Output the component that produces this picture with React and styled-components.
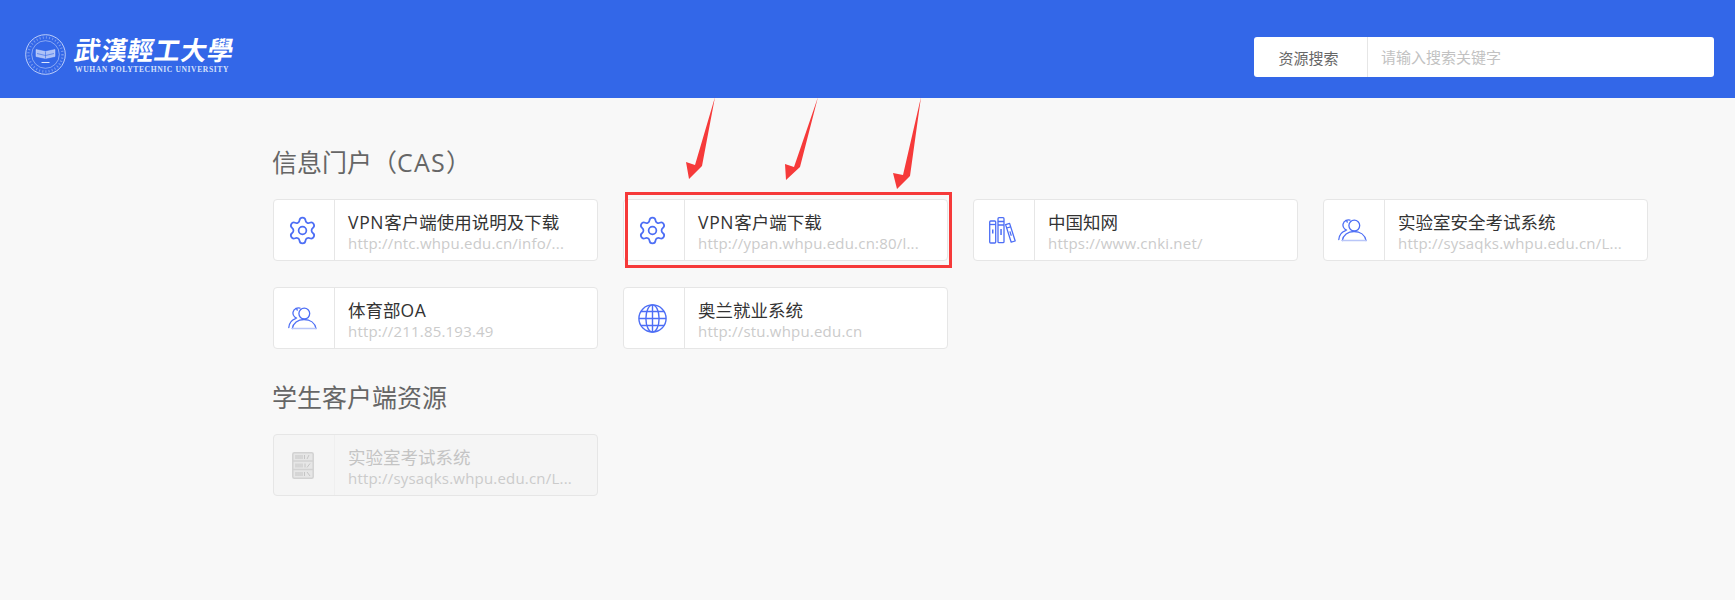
import React from 'react';
import styled, { createGlobalStyle } from 'styled-components';
import { Settings } from 'lucide-react';

const GlobalStyle = createGlobalStyle`
  html, body { margin: 0; padding: 0; background: #f8f8f8; }
  body { font-family: "Open Sans", "Noto Sans CJK SC", sans-serif; }
`;

const Page = styled.div`
  position: relative;
  width: 1735px;
  height: 600px;
  overflow: hidden;
  background: #f8f8f8;
`;

const Header = styled.header`
  height: 98px;
  background: #3367e8;
  display: flex;
  align-items: center;
  justify-content: space-between;
  padding: 0 21px 0 25px;
  box-sizing: border-box;
`;

const Logo = styled.div`
  display: flex;
  align-items: center;
  gap: 9px;
  margin-top: 10px;
`;

const LogoText = styled.div`
  display: flex;
  flex-direction: column;
  color: #fff;
`;

const LogoCn = styled.div`
  font-family: "Noto Sans CJK TC", sans-serif;
  font-weight: 700;
  font-size: 26px;
  line-height: 32px;
  letter-spacing: 0.6px;
  white-space: nowrap;
  transform: skewX(-10deg);
`;

const LogoEn = styled.div`
  font-family: "Liberation Serif", serif;
  font-weight: 700;
  font-size: 7.6px;
  line-height: 10px;
  letter-spacing: 0.6px;
  white-space: nowrap;
  color: #d5e0fb;
`;

const Search = styled.div`
  width: 460px;
  height: 40px;
  margin-top: 16px;
  background: #fff;
  border-radius: 3px;
  display: flex;
  align-items: center;
  font-size: 15px;
`;

const SearchLabel = styled.div`
  width: 109px;
  height: 100%;
  flex: none;
  padding-right: 4px;
  display: flex;
  align-items: center;
  justify-content: center;
  color: #666;
  border-right: 1px solid #e6e6e6;
`;

const SearchInput = styled.input`
  flex: 1;
  border: 0;
  outline: 0;
  padding: 0 13px;
  background: transparent;
  font: inherit;
  &::placeholder { color: #c2c2c2; opacity: 1; }
`;

const Main = styled.main`
  padding: 48px 0 0 273px;
`;

const SectionTitle = styled.h2`
  margin: 0 0 0 -1px;
  font-size: 25px;
  font-weight: 400;
  line-height: 32px;
  color: #666;
`;

const Grid = styled.div`
  display: grid;
  grid-template-columns: repeat(4, 325px);
  column-gap: 25px;
  row-gap: 26px;
  margin: 21px 0 32px;
`;

const Card = styled.div`
  height: 62px;
  box-sizing: border-box;
  display: flex;
  border: 1px solid #e6e6e6;
  border-radius: 4px;
  background: ${p => (p.$disabled ? '#f5f5f5' : '#fff')};
`;

const IconCell = styled.div`
  width: 57px;
  flex: none;
  padding-right: 3px;
  display: flex;
  align-items: center;
  justify-content: center;
  border-right: 1px solid ${p => (p.$disabled ? '#efefef' : '#e6e6e6')};
`;

const CardBody = styled.div`
  flex: 1;
  min-width: 0;
  padding: 10px 0 0 13px;
`;

const CardTitle = styled.div`
  font-size: 17.5px;
  line-height: 24px;
  color: ${p => (p.$disabled ? '#c4c4c4' : '#333')};
  white-space: nowrap;
`;

const CardUrl = styled.div`
  font-size: 15px;
  line-height: 19px;
  letter-spacing: 0.2px;
  color: #cbcbcb;
  white-space: nowrap;
`;

const Latin = styled.span`
  letter-spacing: ${p => p.$spacing}px;
`;

const Annotations = styled.div`
  position: absolute;
  inset: 0;
  pointer-events: none;
`;

const RedBox = styled.div`
  position: absolute;
  left: 625px;
  top: 192px;
  width: 327px;
  height: 76px;
  box-sizing: border-box;
  border: 3px solid #f63a3a;
`;

const ArrowLayer = styled.svg`
  position: absolute;
  left: 0;
  top: 0;
`;

const BLUE = '#4d6ef5';

const Seal = () => (
  <svg width="41" height="41" viewBox="0 0 41 41" fill="none" stroke="#dfe7fc">
    <circle cx="20.5" cy="20.5" r="19.8" strokeWidth="0.8" />
    <circle cx="20.5" cy="20.5" r="13.8" strokeWidth="0.5" />
    <circle cx="20.5" cy="20.5" r="17" strokeWidth="2.4" strokeDasharray="1 2.2" opacity="0.4" />
    <path d="M11 15.500l9.500 2 9.500-2v7l-9.500 2-9.500-2z" fill="#dfe7fc" fillOpacity="0.7" strokeWidth="0.4" />
    <path d="M12 19.500l8.500 2 8.500-2M20.500 17.500v7" stroke="#3367e8" strokeWidth="0.6" />
    <path d="M16.500 28.500h8" strokeWidth="1" />
  </svg>
);

const GearIcon = () => <Settings size={31} strokeWidth={1.35} color={BLUE} />;

const UsersIcon = () => (
  <svg width="29" height="23" viewBox="0 0 29 23" fill="none" stroke={BLUE} strokeWidth="1.3" strokeLinecap="round">
    <circle cx="16.3" cy="6.6" r="5.4" />
    <path d="M9.3 3.2A5.2 5.2 0 0 0 8.2 1.3 5.2 5.2 0 0 1 12 1.2M8.2 1.3a5.2 5.2 0 0 0-1.6 8.6c.5.5 1.2.9 2 1.2" />
    <path d="M4.3 21.500c.8-5.600 5.500-9 11.700-9s11 3.400 12 9" />
    <path d="M4.3 21.500H28" stroke="#b9c6f8" />
    <path d="M.8 20.500c.4-4.300 3-7.600 6.700-8.900" />
  </svg>
);

const BooksIcon = () => (
  <svg width="27" height="27" viewBox="0 0 27 27" fill="none" stroke={BLUE} strokeWidth="1.3" strokeLinejoin="round">
    <rect x="0.7" y="4" width="6" height="22" rx="1" />
    <path d="M.7 7.500h6" />
    <rect x="3" y="12.500" width="1.500" height="4" fill={BLUE} stroke="none" />
    <rect x="9" y="0.7" width="6" height="25" rx="1" />
    <path d="M9 4.500h6M9 8h6" />
    <rect x="11.3" y="12" width="1.500" height="6" fill={BLUE} stroke="none" />
    <path d="M16.600 7.600l4-1.200 5.600 17.600-4 1.200z" />
    <path d="M17.600 11l4-1.200" />
    <path d="M20.300 14.600l1.200-.4 1.400 4.400-1.200.4z" fill={BLUE} stroke="none" />
  </svg>
);

const GlobeIcon = () => (
  <svg width="29" height="29" viewBox="0 0 29 29" fill="none" stroke={BLUE} strokeWidth="1.4">
    <circle cx="14.500" cy="14.500" r="13.600" />
    <ellipse cx="14.500" cy="14.500" rx="6.600" ry="13.600" />
    <path d="M14.500 1v27M1 14.500h27M3 7.500h23M3 21.500h23" />
  </svg>
);

const ShelfIcon = () => (
  <svg width="22" height="27" viewBox="0 0 22 27" fill="none" stroke="#d2d2d2">
    <rect x="0.8" y="0.8" width="20.400" height="25.400" rx="1.500" strokeWidth="1.500" fill="#e6e6e6" />
    <path d="M1 9h20M1 17.500h20" strokeWidth="1.500" />
    <path d="M4 7V3M6 7V3M8 7V3M10 7V3M12.500 7V3M15 7l2-4M4 15.500v-4M6 15.500v-4M8 15.500v-4M10 15.500v-4M13 15.500v-4M15 15.500l3-4M4 24v-4M6 24v-4M8 24v-4M10 24v-4M12.500 24v-4M15 20l3 4" stroke="#bdbdbd" strokeWidth="0.8" />
  </svg>
);

const sections = [
  {
    title: '信息门户（CAS）',
    items: [
      { icon: <GearIcon />, title: 'VPN客户端使用说明及下载', url: 'http://ntc.whpu.edu.cn/info/...' },
      { icon: <GearIcon />, title: 'VPN客户端下载', url: 'http://ypan.whpu.edu.cn:80/l...' },
      { icon: <BooksIcon />, title: '中国知网', url: 'https://www.cnki.net/' },
      { icon: <UsersIcon />, title: '实验室安全考试系统', url: 'http://sysaqks.whpu.edu.cn/L...' },
      { icon: <UsersIcon />, title: '体育部OA', url: 'http://211.85.193.49' },
      { icon: <GlobeIcon />, title: '奥兰就业系统', url: 'http://stu.whpu.edu.cn' },
    ],
  },
  {
    title: '学生客户端资源',
    items: [
      { icon: <ShelfIcon />, title: '实验室考试系统', url: 'http://sysaqks.whpu.edu.cn/L...', disabled: true },
    ],
  },
];

const arrows = [
  '715,97 702,166 689,179 686,162 695,165',
  '818,97 800,167 786,180 785,164 794,167',
  '921,97 910,176 897,189 893,173 903,175',
];

// the latin runs sit a little wider than the installed font sets them
const spaced = (text, spacing) =>
  text.split(/([A-Z]+)/).map((part, i) =>
    i % 2 ? <Latin key={i} $spacing={spacing}>{part}</Latin> : part
  );

const App = () => (
  <Page>
    <GlobalStyle />
    <Header>
      <Logo>
        <Seal />
        <LogoText>
          <LogoCn>武漢輕工大學</LogoCn>
          <LogoEn>WUHAN POLYTECHNIC UNIVERSITY</LogoEn>
        </LogoText>
      </Logo>
      <Search>
        <SearchLabel>资源搜索</SearchLabel>
        <SearchInput placeholder="请输入搜索关键字" />
      </Search>
    </Header>
    <Main>
      {sections.map(section => (
        <section key={section.title}>
          <SectionTitle>{spaced(section.title, 1.2)}</SectionTitle>
          <Grid>
            {section.items.map(item => (
              <Card key={item.title} $disabled={item.disabled}>
                <IconCell $disabled={item.disabled}>{item.icon}</IconCell>
                <CardBody>
                  <CardTitle $disabled={item.disabled}>{spaced(item.title, 0.7)}</CardTitle>
                  <CardUrl>{item.url}</CardUrl>
                </CardBody>
              </Card>
            ))}
          </Grid>
        </section>
      ))}
    </Main>
    <Annotations>
      <RedBox />
      <ArrowLayer width="1735" height="600">
        {arrows.map(points => (
          <polygon key={points} points={points} fill="#f63a3a" />
        ))}
      </ArrowLayer>
    </Annotations>
  </Page>
);

export default App;
